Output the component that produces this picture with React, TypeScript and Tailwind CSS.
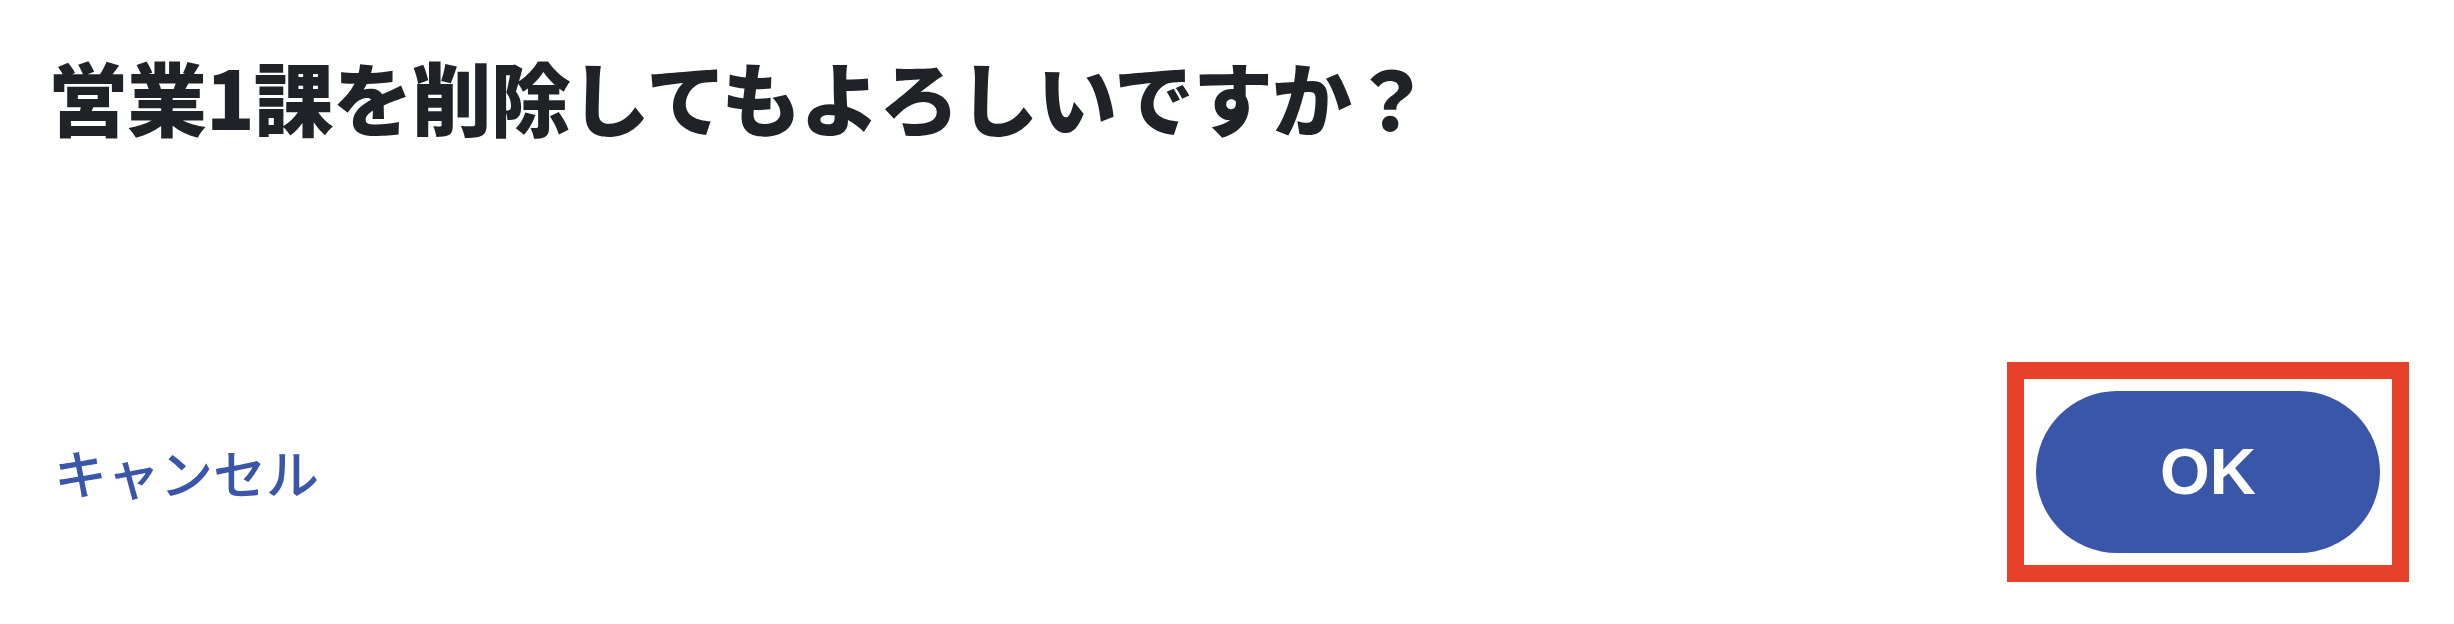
import React from 'react';

export default function App() {
  const jp = { fontFamily: '"Noto Sans CJK JP", "Noto Sans", sans-serif' };

  return (
    <div className="w-full h-[624px] bg-white flex flex-col pl-[48px] pr-[45px]" style={jp}>
      <h1 className="mt-[55px] text-[80px] leading-none font-black text-[#1f2328] tracking-[-1px]">
        営業1課を削除してもよろしいですか？
      </h1>

      <div className="mt-[227px] flex items-center justify-between">
        <button type="button" className="ml-[6px] text-[53px] leading-none text-[#3a56a8] font-medium">
          キャンセル
        </button>

        <div className="border-[17px] border-[#e8412a] p-[12px]">
          <button
            type="button"
            className="w-[344px] h-[162px] rounded-full bg-[#3a56a8] text-white text-[64px] font-bold flex items-center justify-center"
            style={{ fontFamily: '"Liberation Sans", Arial, sans-serif' }}
          >
            OK
          </button>
        </div>
      </div>
    </div>
  );
}
